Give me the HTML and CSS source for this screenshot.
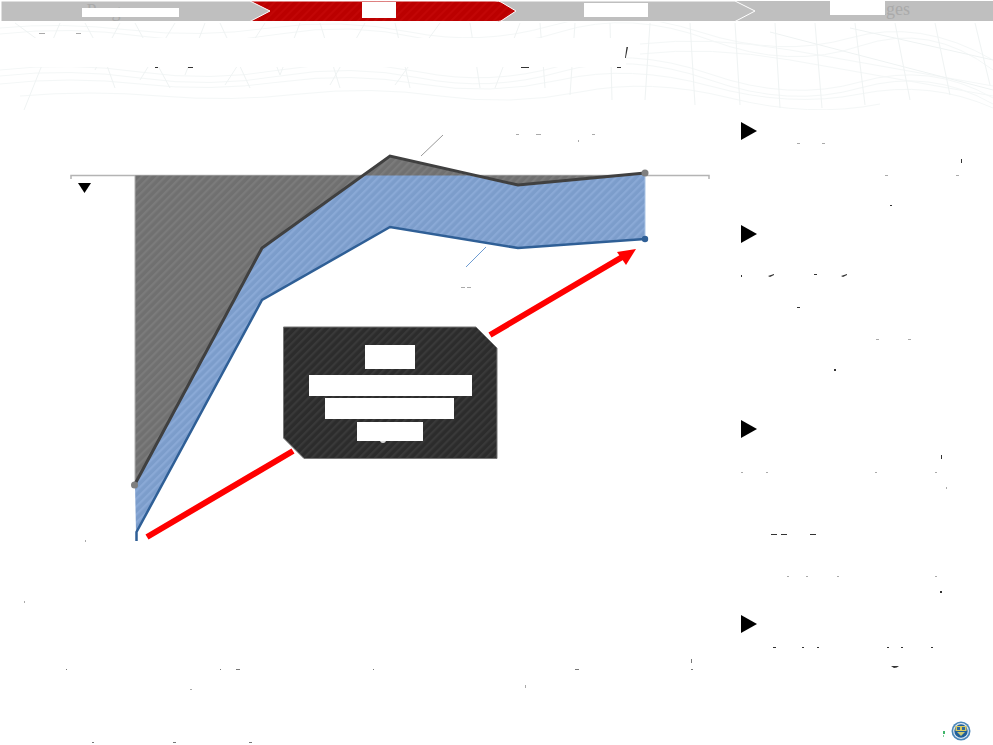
FILE: index.html
```html
<!DOCTYPE html>
<html lang="en">
<head>
    <meta charset="UTF-8">
    <title>Progress and Challenges</title>
    <link rel="stylesheet" href="styles.css">
</head>
<body>
    <div class="page">
        <!-- Shared hatch fills -->
        <svg class="defs" width="0" height="0">
            <defs>
                <pattern id="hatchRed" width="6" height="6" patternUnits="userSpaceOnUse" patternTransform="rotate(-45)">
                    <rect width="6" height="6" fill="#bb0000"/>
                    <rect width="6" height="2" fill="#c20606"/>
                </pattern>
                <pattern id="hatchGrey" width="5.600" height="5.600" patternUnits="userSpaceOnUse" patternTransform="rotate(-45)">
                    <rect width="5.600" height="5.600" fill="#707070"/>
                    <rect width="5.600" height="2.200" fill="#7b7b7b"/>
                </pattern>
                <pattern id="hatchBlue" width="5.600" height="5.600" patternUnits="userSpaceOnUse" patternTransform="rotate(-45)">
                    <rect width="5.600" height="5.600" fill="#7c9dcb"/>
                    <rect width="5.600" height="2.200" fill="#8aa9d6"/>
                </pattern>
                <pattern id="hatchDark" width="5.600" height="5.600" patternUnits="userSpaceOnUse" patternTransform="rotate(-45)">
                    <rect width="5.600" height="5.600" fill="#2c2c2c"/>
                    <rect width="5.600" height="2.200" fill="#393939"/>
                </pattern>
            </defs>
        </svg>

        <nav class="steps">
            <div class="step step-first">
                <svg class="step-shape" width="272" height="22"><path d="M1 1H250L270 11L250 21.500H1Z" fill="#bfbfbf" stroke="#fff"/></svg>
                <span class="label label-progress">Progress</span>
            </div>
            <div class="step step-active">
                <svg class="step-shape" width="270" height="22"><path d="M0 1H245Q249 1 251 2L266 11L251 21Q249 21.500 245 21.500H0Z" fill="url(#hatchRed)" stroke="#fff"/></svg>
                <span class="chip chip-active"></span>
            </div>
            <div class="step step-third">
                <svg class="step-shape" width="264" height="22"><path d="M0 1H240L260 11L240 21.500H0Z" fill="#bfbfbf" stroke="#fff"/></svg>
                <span class="chip chip-third"></span>
            </div>
            <div class="step step-last">
                <svg class="step-shape" width="258" height="22"><path d="M0 1H258V21H0Z" fill="#bfbfbf"/></svg>
                <span class="label label-last">Challenges</span>
            </div>
        </nav>

        <header class="head">
            <svg class="mesh" width="993" height="88" viewBox="0 22 993 88" fill="none">
                <g stroke="#f4f7f7">
                    <path d="M0 28Q60 22 130 30T270 28T410 32T550 26T700 32T850 38T993 60"/>
                    <path d="M0 34Q70 26 140 36T280 34T420 38T560 32T710 40T860 46T993 70"/>
                    <path d="M0 70Q70 62 140 72T280 70T420 72T560 66T710 74T860 82T993 98"/>
                    <path d="M0 76Q70 68 140 78T280 76T420 78T560 72T710 80T860 88T993 104"/>
                    <path d="M0 84Q70 76 140 84T280 82T420 84T560 80T710 86T860 94T993 108"/>
                    <path d="M640 44Q710 36 790 50T993 86M640 54Q710 46 790 60T993 96"/>
                    <path d="M20 96Q90 90 160 96T300 94T440 96T580 92T730 98T880 104"/>
                </g>
                <g stroke="#eff3f3">
                    <path d="M15 23L45 45M60 23L40 70L24 110M85 23L105 60L115 88M120 23L95 70M135 23L170 88M175 23L140 80M205 23L185 75M220 23L250 88M265 23L225 85M300 23L280 75L275 62M320 23L340 88M365 23L330 85M395 23L410 88M440 23L395 85M470 23L480 88M520 23L495 88"/>
                    <path d="M540 23L545 88M575 23L570 95M610 23L612 100M650 23L645 100M690 23L695 105M735 23L740 105M775 23L780 108M815 23L822 108M855 23L865 105M895 23L910 100M935 23L950 95M975 23L990 85"/>
                    <path d="M770 32L993 90M850 28L993 60"/>
                </g>
            </svg>
            <div class="title-mask"></div>
        </header>

        <main class="content">
            <svg class="chart" width="725" height="635" viewBox="0 110 725 635">
                <!-- Axis with category ticks -->
                <path d="M71 179V175.500H709V179" fill="none" stroke="#b4b4b4" stroke-width="1.500"/>
                <path d="M199 175.500V179M326 175.500V179M454 175.500V179M582 175.500V179" stroke="#b4b4b4"/>

                <!-- Bands between the two series -->
                <path d="M135 175.500H364L390 156L470 175.500L518 185L618 175.500L645 173V175.500L645 239L518 248L390 227L262 300L136 532L135 485L262 248L364 175.500" fill="url(#hatchBlue)"/>
                <path d="M135 175.500H364L262 248L135 485Z" fill="url(#hatchGrey)"/>
                <path d="M364 175.500L390 156L470 175.500ZM470 175.500L518 185L618 175.500Z" fill="url(#hatchGrey)"/>
                <path d="M135 175.500V485" stroke="#b0b0b0"/>
                <path d="M645 175V239" stroke="#a9c3e4"/>

                <polyline class="line-grey" points="134.500,485 262,248 390,156 518,185 645,173"/>
                <polyline class="line-blue" points="136.500,541 136.500,532 262,300 390,227 518,248 645,239"/>
                <circle cx="134.500" cy="485" r="3.500" fill="#7f7f7f"/>
                <circle cx="645" cy="173" r="3.500" fill="#7f7f7f"/>
                <circle cx="645" cy="239" r="3.200" fill="#2f5f96"/>

                <path d="M421 156L443 135" stroke="#999"/>
                <path d="M466 267L486 247" stroke="#6d9bd1"/>

                <path d="M78 183H91L84.500 193Z" fill="#000"/>

                <!-- Red trend arrow, broken by the callout -->
                <path d="M147 537L293 451M490 335L624 256" stroke="#f00" stroke-width="6"/>
                <path d="M636 249L617 252L626 265Z" fill="#f00"/>

                <!-- Callout -->
                <path d="M283.500 327H476L497 348V458.500H304L283.500 438Z" fill="url(#hatchDark)" stroke="#777"/>
                <circle cx="383" cy="440" r="3" fill="#ddd"/>
                <rect x="365" y="345" width="50" height="24" fill="#fff"/>
                <rect x="309" y="375" width="163" height="21" fill="#fff"/>
                <rect x="325" y="398" width="129" height="21" fill="#fff"/>
                <rect x="357" y="422" width="66" height="19" fill="#fff"/>
            </svg>

            <aside class="side">
                <div class="side-item side-short"><span class="arrow"></span></div>
                <div class="side-item"><span class="arrow"></span></div>
                <div class="side-item"><span class="arrow"></span></div>
                <div class="side-item side-last">
                    <span class="arrow"></span>
                    <svg class="crest" width="20" height="20" viewBox="0 0 20 20">
                        <circle cx="10" cy="10" r="9.500" fill="#4a86b8"/>
                        <circle cx="10" cy="10" r="7.900" fill="#dfeaf3"/>
                        <circle cx="10" cy="10" r="6.700" fill="#1f5f9a"/>
                        <path d="M4.500 5H15.500V10H4.500Z" fill="#d9c95e"/>
                        <path d="M6 6H9V9H6ZM11 6H14V9H11Z" fill="#2f6a9e"/>
                        <path d="M6 11H14L10 15Z" fill="#c9c978"/>
                    </svg>
                </div>
            </aside>
        </main>

        <!-- Stray marks left around the masked copy -->
        <svg class="specks" width="993" height="745" fill="#333">
            <g fill="#aaa">
                <rect x="39" y="33" width="6" height="1"/><rect x="76" y="33" width="5" height="1"/>
                <rect x="516" y="134" width="3" height="1"/><rect x="536" y="134" width="5" height="1"/>
                <rect x="578" y="140" width="1" height="2"/><rect x="592" y="134" width="3" height="1"/>
                <rect x="461" y="287" width="4" height="1"/><rect x="467" y="287" width="4" height="1"/>
                <rect x="85" y="540" width="1" height="2"/><rect x="24" y="601" width="1" height="2"/>
                <rect x="885" y="175" width="3" height="1"/><rect x="956" y="175" width="3" height="1"/>
                <rect x="797" y="143" width="3" height="1"/><rect x="822" y="143" width="3" height="1"/>
                <rect x="876" y="339" width="3" height="1"/><rect x="908" y="339" width="3" height="1"/>
                <rect x="741" y="472" width="2" height="1"/><rect x="766" y="472" width="2" height="1"/>
                <rect x="875" y="472" width="2" height="1"/><rect x="935" y="472" width="2" height="1"/>
                <rect x="946" y="487" width="1" height="2"/><rect x="787" y="576" width="2" height="1"/>
                <rect x="806" y="576" width="2" height="1"/><rect x="837" y="576" width="2" height="1"/>
                <rect x="935" y="576" width="2" height="1"/><rect x="190" y="689" width="2" height="1"/>
                <rect x="525" y="685" width="1" height="3"/>
            </g>
            <rect x="155" y="67" width="3" height="1"/><rect x="188" y="67" width="5" height="1"/>
            <rect x="521" y="67" width="8" height="1"/><rect x="617" y="67" width="4" height="1"/>
            <path d="M625 58L626.500 47H628L625.800 58Z"/>
            <rect x="961" y="159" width="1" height="4"/><rect x="890" y="205" width="2" height="1"/>
            <rect x="741" y="275" width="1" height="2"/><path d="M768 276L774 274V275L770 277Z"/>
            <rect x="814" y="274" width="3" height="1"/><path d="M841 276L847 274V275L843 277Z"/>
            <rect x="797" y="307" width="3" height="1"/><rect x="834" y="369" width="2" height="2"/>
            <rect x="941" y="455" width="1" height="4"/><rect x="771" y="534" width="6" height="1"/>
            <rect x="781" y="534" width="6" height="1"/><rect x="810" y="534" width="6" height="1"/>
            <rect x="940" y="591" width="2" height="2"/><rect x="773" y="647" width="3" height="1"/>
            <rect x="802" y="647" width="2" height="1"/><rect x="817" y="647" width="2" height="1"/>
            <rect x="887" y="647" width="2" height="1"/><rect x="901" y="647" width="2" height="1"/>
            <rect x="931" y="647" width="2" height="1"/><path d="M891 666H899Q897 668 894 668Z"/>
            <g fill="#777">
                <rect x="66" y="669" width="1" height="1"/><rect x="220" y="669" width="1" height="1"/>
                <rect x="236" y="669" width="4" height="1"/><rect x="373" y="669" width="1" height="1"/>
                <rect x="575" y="669" width="4" height="1"/><rect x="691" y="659" width="1" height="4"/>
                <rect x="691" y="669" width="2" height="1"/><rect x="92" y="742" width="2" height="1"/>
                <rect x="173" y="742" width="3" height="1"/><rect x="249" y="742" width="3" height="1"/>
            </g>
            <rect x="943" y="731" width="2" height="3" fill="#3fb56a"/><rect x="943" y="735" width="1" height="2" fill="#7fcf9a"/>
        </svg>
    </div>
</body>
</html>
```

FILE: styles.css
```css
body {
    margin: 0;
    background-color: #fff;
    font-family: 'Liberation Serif', serif;
}

.page {
    position: relative;
    width: 993px;
    height: 745px;
    overflow: hidden;
}

.defs {
    position: absolute;
}

.steps {
    display: flex;
    height: 22px;
}

.step {
    position: relative;
    display: flex;
    justify-content: center;
    align-items: center;
    height: 22px;
    box-sizing: border-box;
}

.step-first {
    z-index: 4;
    width: 250px;
    padding-left: 10px;
}

.step-active {
    z-index: 3;
    width: 245px;
    padding-left: 12px;
}

.step-third {
    z-index: 2;
    width: 240px;
    padding-left: 2px;
}

.step-last {
    z-index: 1;
    width: 258px;
    padding-left: 12px;
}

.step-shape {
    position: absolute;
    left: 0;
    top: 0;
}

.label {
    position: relative;
    color: #aaa;
    font-size: 18px;
    line-height: 22px;
}

.label-progress {
    width: 92px;
    padding-left: 5px;
}

.label-last {
    margin-top: -4px;
}

/* White blocks lying over the labels */
.label:after {
    content: "";
    position: absolute;
    left: 0;
    background-color: #fff;
}

.label-progress:after {
    right: 0;
    top: 8px;
    height: 9px;
}

.label-last:after {
    width: 55px;
    top: 3px;
    height: 14px;
}

.chip {
    position: relative;
    background-color: #fff;
}

.chip-active {
    width: 34px;
    height: 16px;
    margin-top: -2px;
}

.chip-third {
    width: 64px;
    height: 14px;
    margin-top: -2px;
}

.head {
    position: relative;
    height: 88px;
}

.mesh {
    position: absolute;
    left: 0;
    top: 0;
}

.title-mask {
    position: relative;
    width: 603px;
    height: 29px;
    margin-left: 23px;
    top: 16px;
    background-color: #fff;
}

.content {
    display: grid;
    grid-template-columns: 725px 1fr;
}

.chart {
    display: block;
}

.line-grey {
    fill: none;
    stroke: #404040;
    stroke-width: 3;
}

.line-blue {
    fill: none;
    stroke: #2f5f96;
    stroke-width: 2.500;
}

.side {
    display: flex;
    flex-direction: column;
    height: 623px;
    padding: 12px 22px 0 16px;
}

.side-item {
    height: 195px;
}

.side-short {
    height: 103px;
}

.side-last {
    display: flex;
    flex-direction: column;
    height: 126px;
}

.arrow {
    display: block;
    width: 0;
    height: 0;
    border-top: 9px solid transparent;
    border-bottom: 9px solid transparent;
    border-left: 16px solid #000;
}

.crest {
    display: block;
    margin-top: auto;
    align-self: flex-end;
}

.specks {
    position: absolute;
    left: 0;
    top: 0;
}
```
